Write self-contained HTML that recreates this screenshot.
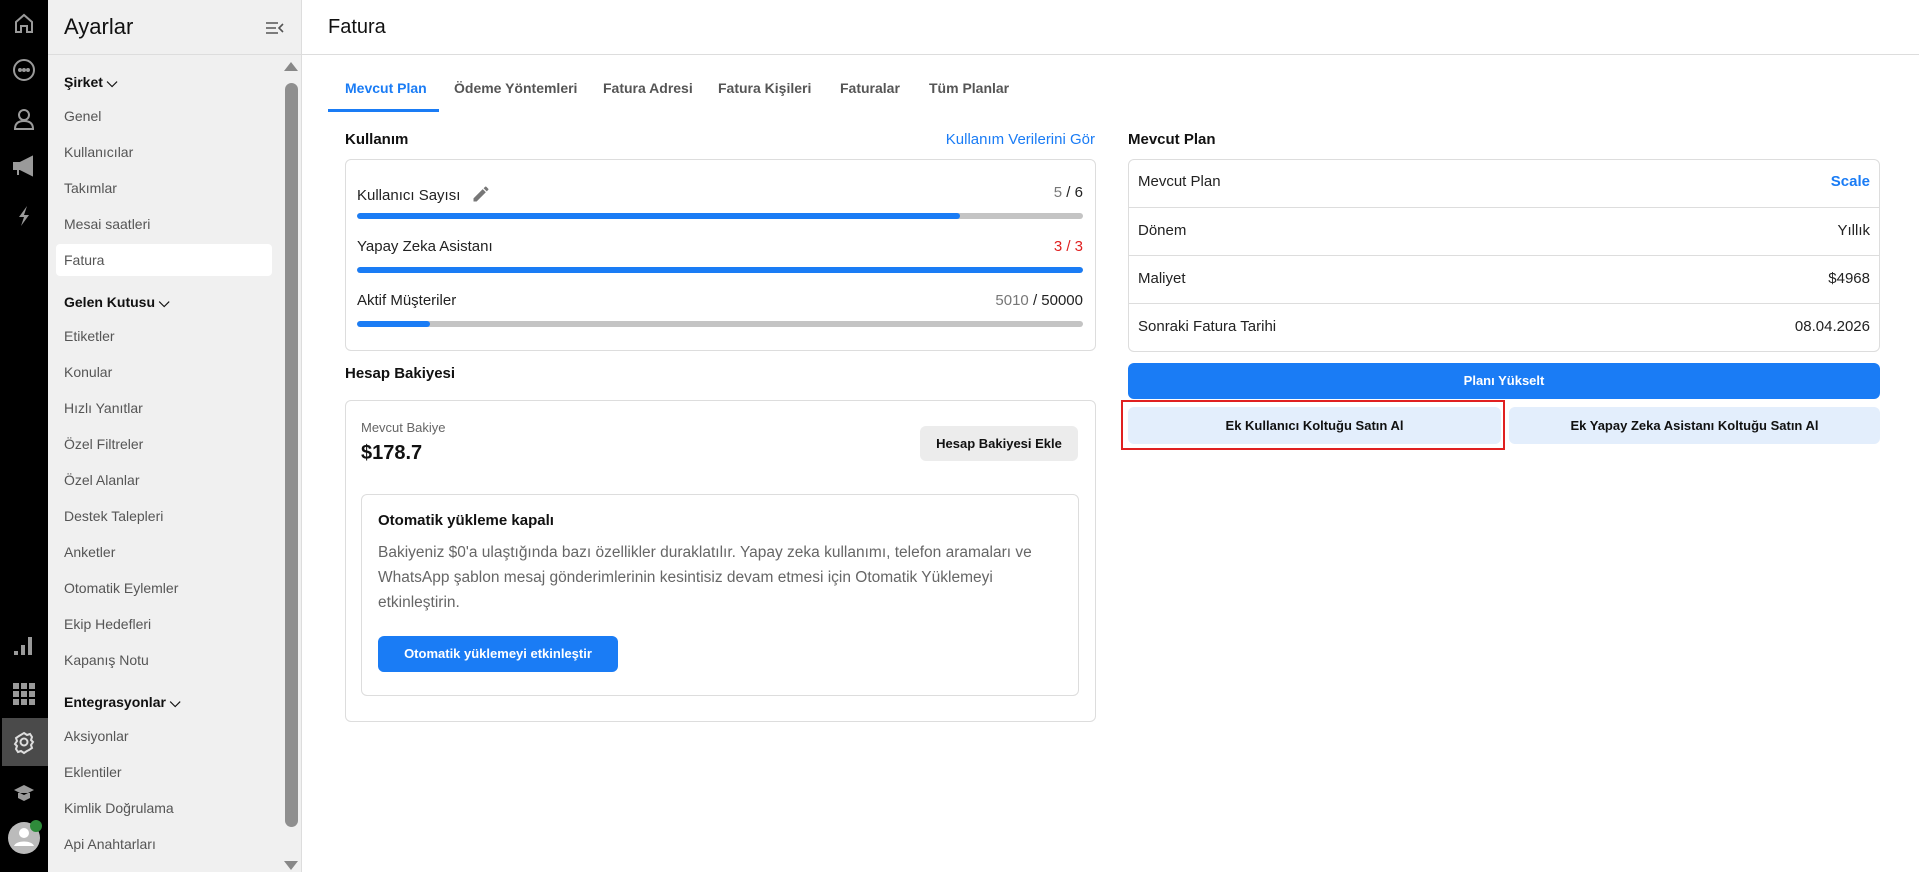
<!DOCTYPE html>
<html><head><meta charset="utf-8"><style>
*{box-sizing:border-box;margin:0;padding:0}
body{width:1919px;height:872px;overflow:hidden;background:#fff;font-family:"Liberation Sans",sans-serif;position:relative;color:#111}
.a{position:absolute;white-space:nowrap}
#rail{left:0;top:0;width:48px;height:872px;background:#000}
#side{left:48px;top:0;width:254px;height:872px;background:#f0f0f0;border-right:1px solid #ddd}
.mi{position:absolute;left:64px;font-size:14px;color:#555}
.sh{position:absolute;left:64px;font-size:14px;color:#111;font-weight:bold}
.tab{position:absolute;top:80px;font-size:14px;font-weight:bold;color:#555}
.bar{position:absolute;left:357px;width:726px;height:6px;border-radius:3px;background:#c4c4c4;overflow:hidden}
.bar i{display:block;height:100%;background:#1a7cf5;border-radius:3px}
.lab{position:absolute;left:357px;font-size:15px;color:#222}
.val{position:absolute;right:836px;font-size:15px;color:#222}
.row{position:absolute;left:1128px;width:752px;height:48px;border-top:1px solid #ddd;font-size:15px;color:#222}
.row span{position:absolute;left:10px;top:14px}
.row b{position:absolute;right:10px;top:14px;font-weight:normal}
</style></head><body>
<div class="a" id="rail"></div>
<svg class="a" style="left:0;top:0" width="48" height="872" fill="none" stroke="#9a9a9a" stroke-width="2">
<path d="M16 32V22l8-7 8 7v10h-5v-6h-6v6z"/>
<circle cx="24" cy="70" r="10"/><circle cx="20" cy="70" r="1" fill="#9a9a9a"/><circle cx="24" cy="70" r="1" fill="#9a9a9a"/><circle cx="28" cy="70" r="1" fill="#9a9a9a"/>
<circle cx="24" cy="115" r="5"/><path d="M15 129c0-6 4-8 9-8s9 2 9 8z"/>
<path d="M14 163h6l12-6v18l-12-6h-6z" fill="#9a9a9a"/><path d="M18 169v6" />
<path d="M27 206l-8 11h5l-3 9 8-11h-5z" fill="#9a9a9a" stroke="none"/>
<rect x="14" y="651" width="4" height="4" fill="#9a9a9a" stroke="none"/><rect x="21" y="645" width="4" height="10" fill="#9a9a9a" stroke="none"/><rect x="28" y="637" width="4" height="18" fill="#9a9a9a" stroke="none"/>
<g fill="#9a9a9a" stroke="none"><rect x="13" y="683" width="6" height="6"/><rect x="21" y="683" width="6" height="6"/><rect x="29" y="683" width="6" height="6"/><rect x="13" y="691" width="6" height="6"/><rect x="21" y="691" width="6" height="6"/><rect x="29" y="691" width="6" height="6"/><rect x="13" y="699" width="6" height="6"/><rect x="21" y="699" width="6" height="6"/><rect x="29" y="699" width="6" height="6"/></g>
<rect x="2" y="718" width="46" height="48" fill="#4a4a4a" stroke="none"/>
<circle cx="24" cy="742" r="3.5" stroke="#ddd"/><path d="M24 733l3 2 3-1 2 3-1 3 2 2-2 3 1 3-3 2-2 1-3 2-3-2-3 1-2-3 1-3-2-2 2-3-1-3 3-2z" stroke="#ddd"/>
<path d="M14 790l10-5 10 5-10 5z M18 793v5l6 3 6-3v-5z" fill="#9a9a9a" stroke="none"/>
<circle cx="24" cy="838" r="16" fill="#bbb" stroke="none"/><circle cx="24" cy="833" r="5" fill="#fff" stroke="none"/><path d="M14 846c2-6 18-6 20 0z" fill="#fff" stroke="none"/><circle cx="36" cy="826" r="6" fill="#2e8b3a" stroke="none"/>
</svg>
<div class="a" id="side"></div>
<div class="a" style="left:48px;top:54px;width:254px;height:1px;background:#ddd"></div>
<div class="a" style="left:64px;top:14px;font-size:22px;color:#111">Ayarlar</div>
<svg class="a" style="left:265px;top:20px" width="20" height="16" stroke="#555" stroke-width="1.6" fill="none"><path d="M1 3h12M1 8h10M1 13h12M18 4l-4 4 4 4"/></svg>
<div class="a" style="left:284px;top:62px;width:0;height:0;border-left:7px solid transparent;border-right:7px solid transparent;border-bottom:9px solid #888"></div>
<div class="a" style="left:285px;top:83px;width:13px;height:744px;background:#8f8f8f;border-radius:7px"></div>
<div class="a" style="left:284px;top:861px;width:0;height:0;border-left:7px solid transparent;border-right:7px solid transparent;border-top:9px solid #888"></div>
<div class="a" style="left:56px;top:244px;width:216px;height:32px;background:#fff;border-radius:4px"></div>
<div class="sh" style="top:74px">Şirket ⌵</div>
<div class="mi" style="top:108px">Genel</div>
<div class="mi" style="top:144px">Kullanıcılar</div>
<div class="mi" style="top:180px">Takımlar</div>
<div class="mi" style="top:216px">Mesai saatleri</div>
<div class="mi" style="top:252px">Fatura</div>
<div class="sh" style="top:294px">Gelen Kutusu ⌵</div>
<div class="mi" style="top:328px">Etiketler</div>
<div class="mi" style="top:364px">Konular</div>
<div class="mi" style="top:400px">Hızlı Yanıtlar</div>
<div class="mi" style="top:436px">Özel Filtreler</div>
<div class="mi" style="top:472px">Özel Alanlar</div>
<div class="mi" style="top:508px">Destek Talepleri</div>
<div class="mi" style="top:544px">Anketler</div>
<div class="mi" style="top:580px">Otomatik Eylemler</div>
<div class="mi" style="top:616px">Ekip Hedefleri</div>
<div class="mi" style="top:652px">Kapanış Notu</div>
<div class="sh" style="top:694px">Entegrasyonlar ⌵</div>
<div class="mi" style="top:728px">Aksiyonlar</div>
<div class="mi" style="top:764px">Eklentiler</div>
<div class="mi" style="top:800px">Kimlik Doğrulama</div>
<div class="mi" style="top:836px">Api Anahtarları</div>

<div class="a" style="left:302px;top:54px;width:1617px;height:1px;background:#ddd"></div>
<div class="a" style="left:328px;top:16px;font-size:20px;color:#111">Fatura</div>
<div class="tab" style="left:345px;color:#1a7cf5">Mevcut Plan</div>
<div class="tab" style="left:454px">Ödeme Yöntemleri</div>
<div class="tab" style="left:603px">Fatura Adresi</div>
<div class="tab" style="left:718px">Fatura Kişileri</div>
<div class="tab" style="left:840px">Faturalar</div>
<div class="tab" style="left:929px">Tüm Planlar</div>
<div class="a" style="left:328px;top:109px;width:111px;height:3px;background:#1a7cf5"></div>

<div class="a" style="left:345px;top:131px;font-size:15px;font-weight:bold">Kullanım</div>
<div class="a" style="right:824px;top:131px;font-size:15px;color:#1a7cf5">Kullanım Verilerini Gör</div>
<div class="a" style="left:345px;top:159px;width:751px;height:192px;border:1px solid #ddd;border-radius:6px"></div>
<div class="lab" style="top:184px">Kullanıcı Sayısı <svg width="20" height="20" style="vertical-align:-4px;margin-left:6px" viewBox="0 0 24 24"><path d="M3 17.25V21h3.75L17.8 9.94l-3.75-3.75zM20.7 7.04a1 1 0 000-1.41l-2.34-2.34a1 1 0 00-1.41 0l-1.83 1.83 3.75 3.75z" fill="#777"/></svg></div>
<div class="val" style="top:184px"><span style="color:#777">5</span> / 6</div>
<div class="bar" style="top:213px"><i style="width:83%"></i></div>
<div class="lab" style="top:238px">Yapay Zeka Asistanı</div>
<div class="val" style="top:238px;color:#e02020">3 / 3</div>
<div class="bar" style="top:267px"><i style="width:100%"></i></div>
<div class="lab" style="top:292px">Aktif Müşteriler</div>
<div class="val" style="top:292px"><span style="color:#777">5010</span> / 50000</div>
<div class="bar" style="top:321px"><i style="width:10%"></i></div>

<div class="a" style="left:345px;top:365px;font-size:15px;font-weight:bold">Hesap Bakiyesi</div>
<div class="a" style="left:345px;top:400px;width:751px;height:322px;border:1px solid #ddd;border-radius:6px"></div>
<div class="a" style="left:361px;top:420px;font-size:13px;color:#666">Mevcut Bakiye</div>
<div class="a" style="left:361px;top:442px;font-size:20px;font-weight:bold">$178.7</div>
<div class="a" style="left:920px;top:426px;width:158px;height:35px;background:#ececec;border-radius:6px;font-size:13px;font-weight:bold;text-align:center;line-height:35px">Hesap Bakiyesi Ekle</div>
<div class="a" style="left:361px;top:494px;width:718px;height:202px;border:1px solid #ddd;border-radius:6px"></div>
<div class="a" style="left:378px;top:512px;font-size:15px;font-weight:bold">Otomatik yükleme kapalı</div>
<div class="a" style="left:378px;top:540px;width:690px;font-size:15.5px;line-height:25px;color:#666;white-space:normal">Bakiyeniz $0'a ulaştığında bazı özellikler duraklatılır. Yapay zeka kullanımı, telefon aramaları ve WhatsApp şablon mesaj gönderimlerinin kesintisiz devam etmesi için Otomatik Yüklemeyi etkinleştirin.</div>
<div class="a" style="left:378px;top:636px;width:240px;height:36px;background:#1a7cf5;border-radius:6px;color:#fff;font-size:13px;font-weight:bold;text-align:center;line-height:36px">Otomatik yüklemeyi etkinleştir</div>

<div class="a" style="left:1128px;top:131px;font-size:15px;font-weight:bold">Mevcut Plan</div>
<div class="a" style="left:1128px;top:159px;width:752px;height:193px;border:1px solid #ddd;border-radius:6px;overflow:hidden"></div>
<div class="row" style="top:159px;border-top:none"><span>Mevcut Plan</span><b style="color:#1a7cf5;font-weight:bold">Scale</b></div>
<div class="row" style="top:207px"><span>Dönem</span><b>Yıllık</b></div>
<div class="row" style="top:255px"><span>Maliyet</span><b>$4968</b></div>
<div class="row" style="top:303px"><span>Sonraki Fatura Tarihi</span><b>08.04.2026</b></div>
<div class="a" style="left:1128px;top:363px;width:752px;height:36px;background:#1a7cf5;border-radius:6px;color:#fff;font-size:13px;font-weight:bold;text-align:center;line-height:36px">Planı Yükselt</div>
<div class="a" style="left:1128px;top:407px;width:373px;height:37px;background:#e3eefc;border-radius:6px;font-size:13px;font-weight:bold;text-align:center;line-height:37px">Ek Kullanıcı Koltuğu Satın Al</div>
<div class="a" style="left:1509px;top:407px;width:371px;height:37px;background:#e3eefc;border-radius:6px;font-size:13px;font-weight:bold;text-align:center;line-height:37px">Ek Yapay Zeka Asistanı Koltuğu Satın Al</div>
<div class="a" style="left:1121px;top:400px;width:384px;height:50px;border:2px solid #e02020"></div>
</body></html>
